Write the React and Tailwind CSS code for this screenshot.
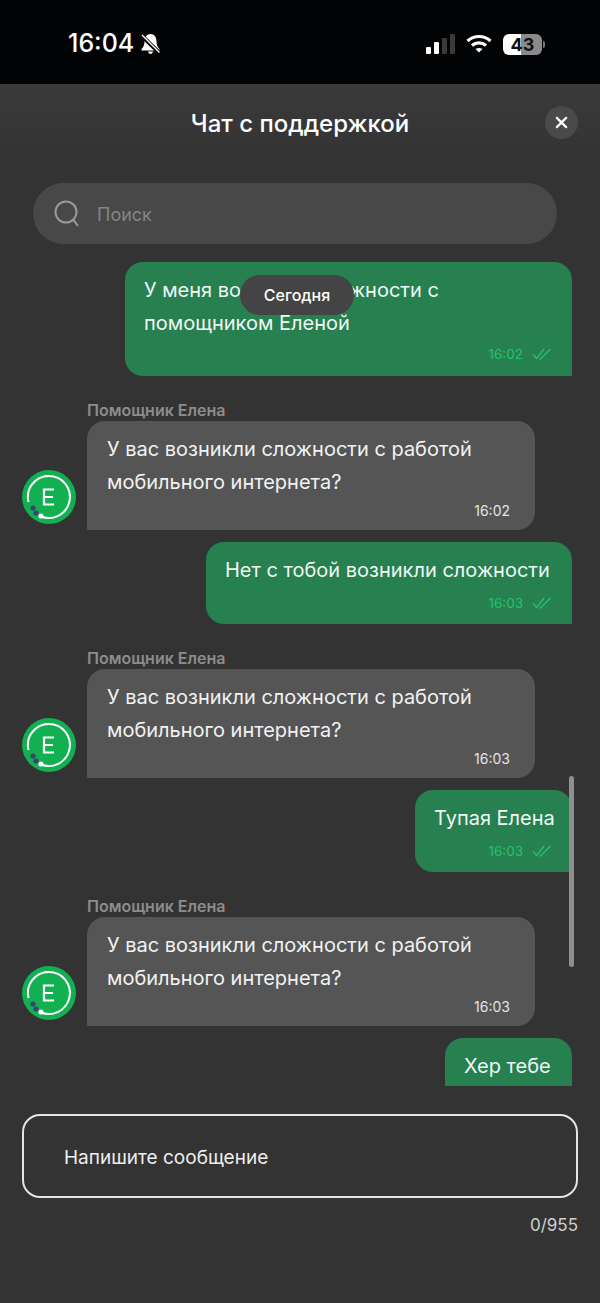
import React from 'react';

const FONT = { fontFamily: 'Inter, "Noto Sans", sans-serif' };

const Ticks = () => (
  <svg width="20" height="12" viewBox="0 0 20 12" fill="none" stroke="#25c26e" strokeWidth="1.4" className="ml-[9px]">
    <path d="M1 6.5 L4.5 10.5 L12 1" />
    <path d="M7.5 10.5 L8.5 11 L18.5 1" />
  </svg>
);

const Avatar = () => (
  <svg width="54" height="54" viewBox="0 0 54 54" className="shrink-0 mb-[6px]">
    <circle cx="27" cy="27" r="27" fill="#12b050" />
    <path d="M6.5 32 A21 21 0 1 1 18 46" fill="none" stroke="#fff" strokeWidth="2" />
    <path d="M32 19.5 H22 V34.5 H32 M22 27 H31" fill="none" stroke="#fff" strokeWidth="2.2" />
    <circle cx="11" cy="38" r="2.6" fill="#3f3f78" />
    <circle cx="14" cy="43" r="2.6" fill="#3f3f78" />
    <circle cx="19" cy="46" r="2.6" fill="#fff" />
  </svg>
);

const Outgoing = ({ text, time, width, first }) => (
  <div className={`flex justify-end ${first ? '' : 'mt-[12px]'}`}>
    <div
      className={`bg-[#268050] rounded-t-[18px] rounded-bl-[18px] pt-[12px] pl-[19px] pr-[18px] text-[#f2f7f4] text-[20px] leading-[33px] ${first ? 'pb-[12px]' : 'pb-[11px]'}`}
      style={{ width }}
    >
      <div className="whitespace-pre">{text}</div>
      <div className={`flex items-center justify-end h-[20px] pr-[2px] text-[13.5px] leading-[20px] text-[#25c26e] ${first ? 'mt-[4px]' : 'mt-[6px]'}`}>
        {time}
        <Ticks />
      </div>
    </div>
  </div>
);

const Incoming = ({ time }) => (
  <div className="mt-[24px] flex items-end pl-[22px] gap-[11px]">
    <Avatar />
    <div>
      <div className="text-[16px] leading-[20px] pb-[1px] font-semibold text-[#8c8c8c]">Помощник Елена</div>
      <div className="w-[448px] h-[109px] bg-[#555555] rounded-t-[18px] rounded-br-[18px] pt-[12px] px-[20px] text-[#f2f2f2] text-[20px] leading-[33px]">
        <div>У вас возникли сложности с работой</div>
        <div>мобильного интернета?</div>
        <div className="text-right pr-[5px] mt-[2px] text-[14px] leading-[20px] text-[#e4e4e4]">{time}</div>
      </div>
    </div>
  </div>
);

export default function App() {
  return (
    <div className="w-[600px] h-[1303px] bg-[#333333] flex flex-col overflow-hidden" style={FONT}>
      {/* status bar */}
      <div className="h-[84px] shrink-0 bg-[#020305] flex items-center justify-between pl-[68px] pr-[55px] pt-[4px]">
        <div className="flex items-center gap-[6px] text-white text-[25px] font-medium">
          <span>16:04</span>
          <svg width="21" height="22" viewBox="0 0 20 22">
            <path d="M10 1 C5.5 1 4 5 4 8.5 C4 12 3 14 1 16 V17.5 H19 V16 C17 14 16 12 16 8.5 C16 5 14.5 1 10 1 Z M7.5 18.5 C7.8 20 8.8 21 10 21 C11.2 21 12.2 20 12.5 18.5 Z" fill="#fff" />
            <path d="M1 2.5 L19 20" stroke="#020305" strokeWidth="4" />
            <path d="M1.5 2 L19 19.5" stroke="#fff" strokeWidth="1.5" />
          </svg>
        </div>
        <div className="flex items-center">
          <div className="flex items-end gap-[3px] h-[20px]">
            <div className="w-[5px] h-[7px] rounded-[1px] bg-white" />
            <div className="w-[5px] h-[12px] rounded-[1px] bg-white" />
            <div className="w-[5px] h-[16px] rounded-[1px] bg-[#3a3a3a]" />
            <div className="w-[5px] h-[20px] rounded-[1px] bg-[#3a3a3a]" />
          </div>
          <svg width="26" height="20" viewBox="0 0 26 20" className="ml-[11px]" fill="none" stroke="#fff" strokeWidth="3.2">
            <path d="M1.5 7 C8 1 18 1 24.5 7" />
            <path d="M6 11.5 C10 8 16 8 20 11.5" />
            <path d="M13 18.5 L9.5 15 C11.5 13.5 14.5 13.5 16.5 15 Z" fill="#fff" stroke="none" />
          </svg>
          <div className="ml-[11px] flex items-center">
            <div
              className="w-[39px] h-[21px] rounded-[6px] flex items-center justify-center text-[#111] text-[18px] font-bold"
              style={{ background: 'linear-gradient(90deg,#fff 0 46%,#8a8a8a 46% 100%)' }}
            >
              43
            </div>
            <div className="w-[2px] h-[7px] ml-[1px] rounded-r-full bg-[#777]" />
          </div>
        </div>
      </div>

      {/* header */}
      <div className="relative h-[80px] shrink-0 flex items-center justify-center bg-linear-to-b from-[#3a3a3a] to-[#333333]">
        <div className="text-white text-[24px] font-medium">Чат с поддержкой</div>
        <div className="absolute right-[22px] top-[22px] w-[33px] h-[33px] rounded-full bg-[#4a4a4a] flex items-center justify-center">
          <svg width="13" height="13" viewBox="0 0 14 14" stroke="#fff" strokeWidth="2.4" strokeLinecap="round">
            <path d="M2 2 L12 12 M12 2 L2 12" />
          </svg>
        </div>
      </div>

      {/* search */}
      <div className="shrink-0 pt-[19px] pl-[33px]">
        <div className="h-[61px] w-[524px] rounded-full bg-[#484848] flex items-center pl-[21px]">
          <svg width="26" height="28" viewBox="0 0 26 28" fill="none" stroke="#9a9a9a" strokeWidth="2">
            <circle cx="12" cy="12" r="10.5" />
            <path d="M19.5 20 L24 26" />
          </svg>
          <span className="ml-[17px] pt-[1px] text-[#858585] text-[18px]">Поиск</span>
        </div>
      </div>

      {/* messages */}
      <div className="relative h-[824px] shrink-0 mt-[18px] pr-[28px] overflow-hidden">
        <Outgoing first width={447} text={'У меня возникли сложности с\nпомощником Еленой'} time="16:02" />
        <Incoming time="16:02" />
        <Outgoing width={366} text="Нет с тобой возникли сложности" time="16:03" />
        <Incoming time="16:03" />
        <Outgoing width={157} text="Тупая Елена" time="16:03" />
        <Incoming time="16:03" />
        <Outgoing width={127} text="Хер тебе" time="16:03" />

        <div className="absolute left-[240px] top-[13px] w-[114px] h-[40px] rounded-full bg-[#444444] flex items-center justify-center text-white text-[16px] font-medium">
          Сегодня
        </div>
        <div className="absolute left-[569px] top-[514px] w-[5px] h-[191px] rounded-full bg-[#8f8f8f]" />
      </div>

      {/* input */}
      <div className="px-[22px] pt-[28px]">
        <div className="h-[84px] rounded-[18px] border-2 border-[#e4e4e4] flex items-center pl-[40px] pt-[5px] text-[#eeeeee] text-[19px]">
          Напишите сообщение
        </div>
        <div className="mt-[16px] text-right text-[#d0d0d0] text-[17px] leading-[22px]">0/955</div>
      </div>
    </div>
  );
}
